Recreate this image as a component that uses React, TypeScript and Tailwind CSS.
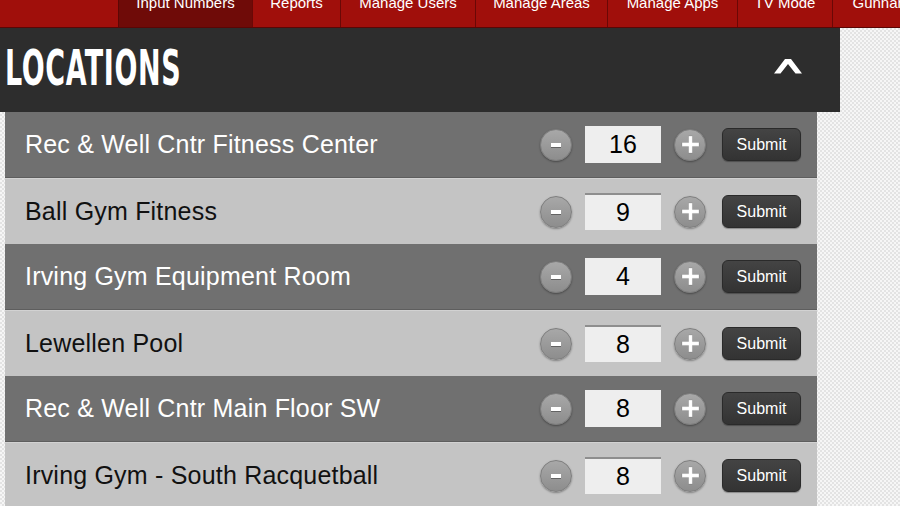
import React from "react";

const tabs = [
  { label: "Input Numbers", w: "w-[134px]", active: true },
  { label: "Reports", w: "w-[88px]" },
  { label: "Manage Users", w: "w-[135px]" },
  { label: "Manage Areas", w: "w-[132px]" },
  { label: "Manage Apps", w: "w-[130px]" },
  { label: "TV Mode", w: "w-[95px]" },
  { label: "Gunnar", w: "w-[90px]" },
];

const locations = [
  { name: "Rec & Well Cntr Fitness Center", count: 16 },
  { name: "Ball Gym Fitness", count: 9 },
  { name: "Irving Gym Equipment Room", count: 4 },
  { name: "Lewellen Pool", count: 8 },
  { name: "Rec & Well Cntr Main Floor SW", count: 8 },
  { name: "Irving Gym - South Racquetball", count: 8 },
];

function RoundButton({ sign }: { sign: "-" | "+" }) {
  return (
    <button className="relative flex h-[32px] w-[32px] items-center justify-center rounded-full border border-[#7e7e7e] bg-gradient-to-b from-[#a8a8a8] to-[#8d8d8d] shadow-[0_1px_2px_rgba(0,0,0,0.35)]">
      {sign === "-" ? (
        <span className="block h-[4px] w-[10px] bg-white shadow-[0_1px_0_rgba(0,0,0,0.35)]" />
      ) : (
        <svg width="19" height="19" viewBox="0 0 19 19">
          <path d="M7.6 1h3.8v6.6H18v3.8h-6.6V18H7.6v-6.6H1V7.6h6.6z" fill="#fff" stroke="rgba(0,0,0,0.2)" strokeWidth="0.6" />
        </svg>
      )}
    </button>
  );
}

function LocationRow({ name, count, dark }: { name: string; count: number; dark: boolean }) {
  return (
    <div
      className={
        dark
          ? "flex h-[66px] shrink-0 items-center border-b border-[#5e5e5e] bg-[#707070] pl-[20px] pr-[16px] text-white"
          : "flex h-[66px] shrink-0 items-center border-t border-[#d2d2d2] bg-[#c4c4c4] pl-[20px] pr-[16px] text-[#111]"
      }
    >
      <div className="flex-1 text-[25px] leading-none tracking-[0.2px]">{name}</div>
      <div className="flex items-center">
        <RoundButton sign="-" />
        <div
          className={
            dark
              ? "ml-[13px] flex h-[37px] w-[76px] items-center justify-center bg-[#eeeeee] text-[25px] text-black"
              : "ml-[13px] flex h-[37px] w-[76px] items-center justify-center border-t-2 border-[#8e8e8e] bg-[#eeeeee] text-[25px] text-black"
          }
        >
          {count}
        </div>
        <div className="ml-[13px]">
          <RoundButton sign="+" />
        </div>
        <button className="ml-[16px] h-[33px] w-[79px] rounded-[6px] border border-[#2a2a2a] bg-gradient-to-b from-[#444] to-[#333] text-[16px] leading-none text-white shadow-[0_1px_1px_rgba(0,0,0,0.3)]">
          Submit
        </button>
      </div>
    </div>
  );
}

export default function App() {
  return (
    <div className="h-[506px] w-[900px] overflow-hidden bg-[#f0f0f0] bg-[image:repeating-conic-gradient(#e3e3e3_0_25%,#f6f6f6_0_50%)] bg-size-[4px_4px] font-['Liberation_Sans',Arial,sans-serif]">
      {/* top nav */}
      <nav className="flex h-[28px] border-b border-[#5a0605] bg-[#a00f0b] pl-[118px]">
        {tabs.map((t) => (
          <div
            key={t.label}
            className={
              t.active
                ? `${t.w} shrink-0 overflow-hidden border-l border-[#5c0705] bg-[#6f0b08] text-center text-[15px] text-white`
                : `${t.w} shrink-0 overflow-hidden border-l border-[#6a0806] text-center text-[15px] text-white`
            }
          >
            <span className="-mt-[7px] block leading-[20px]">{t.label}</span>
          </div>
        ))}
      </nav>

      {/* section header */}
      <header className="flex h-[84px] w-[840px] items-center justify-between bg-[#2d2d2d] pl-[5px] pr-[38px]">
        <h1 className="-mt-[4px] origin-left scale-x-[0.6] font-['DejaVu_Sans',sans-serif] text-[50px] font-bold leading-none tracking-[1px] text-white [font-stretch:condensed]">
          LOCATIONS
        </h1>
        <svg width="28" height="16" viewBox="0 0 28 16" className="mt-[-8px]">
          <path d="M0 15.5 L11 1 H17 L28 15.5 H21.5 L14 6 L6.5 15.5 Z" fill="#fff" />
        </svg>
      </header>

      {/* list */}
      <div className="ml-[5px] flex w-[812px] flex-col">
        {locations.map((l, i) => (
          <LocationRow key={i} name={l.name} count={l.count} dark={i % 2 === 0} />
        ))}
      </div>
    </div>
  );
}
